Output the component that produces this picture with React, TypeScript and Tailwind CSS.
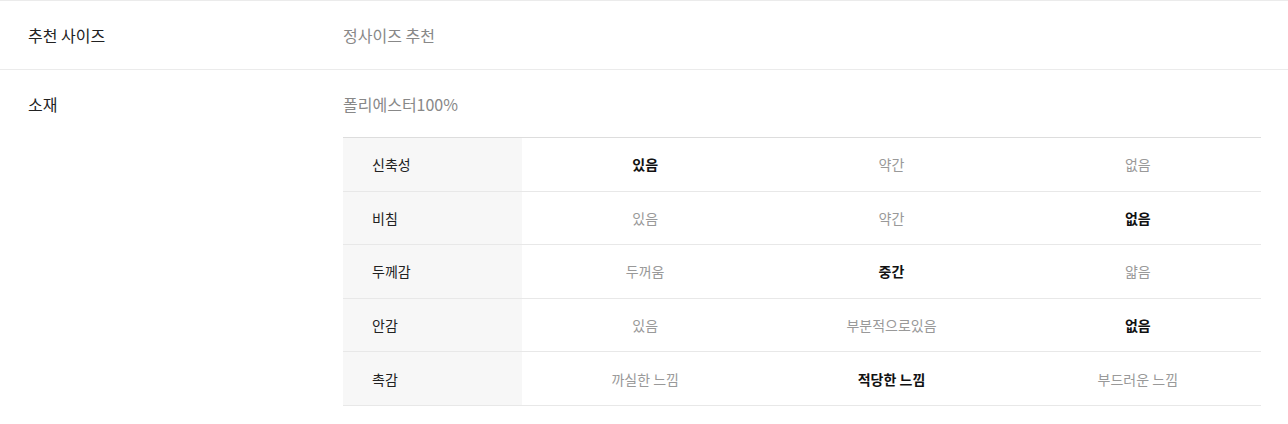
import React from 'react';

type Row = { label: string; options: string[]; active: number };

const rows: Row[] = [
  { label: '신축성', options: ['있음', '약간', '없음'], active: 0 },
  { label: '비침', options: ['있음', '약간', '없음'], active: 2 },
  { label: '두께감', options: ['두꺼움', '중간', '얇음'], active: 1 },
  { label: '안감', options: ['있음', '부분적으로있음', '없음'], active: 2 },
  { label: '촉감', options: ['까실한 느낌', '적당한 느낌', '부드러운 느낌'], active: 1 },
];

const App: React.FC = () => {
  return (
    <div
      className="bg-white w-[1288px] min-h-[424px] text-[#222]"
      style={{ fontFamily: '"Noto Sans CJK KR", "Noto Sans", sans-serif' }}
    >
      <div className="flex border-t border-b border-[#ebebeb] py-[23px] leading-[22px] text-[16px]">
        <div className="w-[343px] pl-[28px] shrink-0">추천 사이즈</div>
        <div className="text-[#888]">정사이즈 추천</div>
      </div>

      <div className="flex pt-[23px] leading-[22px] text-[16px]">
        <div className="w-[343px] pl-[28px] shrink-0">소재</div>
        <div className="w-[918px]">
          <div className="text-[#888]">폴리에스터100%</div>
          <div className="mt-[22px] border-t border-[#ddd] text-[14px]">
            {rows.map((row) => (
              <div key={row.label} className="flex h-[53.6px] border-b border-[#e8e8e8]">
                <div className="w-[179px] shrink-0 bg-[#f7f7f7] pl-[29px] flex items-center text-[#222]">
                  {row.label}
                </div>
                {row.options.map((opt, i) => (
                  <div
                    key={opt + i}
                    className={`flex-1 flex items-center justify-center ${
                      i === row.active ? 'font-bold text-[#111]' : 'text-[#999]'
                    }`}
                  >
                    {opt}
                  </div>
                ))}
              </div>
            ))}
          </div>
        </div>
      </div>
    </div>
  );
};

export default App;
